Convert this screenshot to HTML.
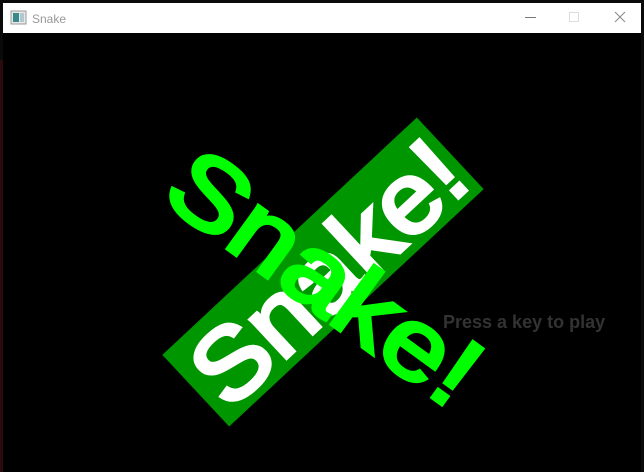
<!DOCTYPE html>
<html><head><meta charset="utf-8"><style>
html,body{margin:0;padding:0;background:#000;width:644px;height:472px;overflow:hidden}
</style></head><body>
<svg width="644" height="472" viewBox="0 0 644 472" xmlns="http://www.w3.org/2000/svg" style="display:block">
<rect x="0" y="0" width="644" height="472" fill="#0a0a0a"/>
<rect x="0" y="60" width="3" height="412" fill="#2a0a0a"/>
<rect x="3" y="3" width="638" height="30" fill="#fff"/>
<rect x="3" y="33" width="638" height="439" fill="#000"/>
<rect x="11" y="11" width="15" height="13" fill="#e8e8e8" stroke="#9a9a9a" stroke-width="1"/>
<rect x="13" y="13" width="6" height="9" fill="#3a8a8a"/>
<rect x="20" y="13" width="4" height="9" fill="#b0c8d0"/>
<text x="32" y="23" font-family="Liberation Sans, sans-serif" font-size="12" fill="#999">Snake</text>
<line x1="525" y1="17.5" x2="536" y2="17.5" stroke="#777" stroke-width="1"/>
<rect x="569.5" y="12.5" width="9" height="9" fill="none" stroke="#ddd" stroke-width="1"/>
<path d="M615 12 L625 22 M625 12 L615 22" stroke="#888" stroke-width="1"/>
<g transform="translate(323,272) rotate(-43)">
<rect x="-174" y="-49" width="348" height="98" fill="#009600"/>
<text x="-164" y="38" textLength="334" lengthAdjust="spacingAndGlyphs" font-family="Liberation Sans, sans-serif" font-size="100" fill="#fff" stroke="#fff" stroke-width="4">Snake!</text>
</g>
<g transform="translate(328,276) rotate(36)">
<text x="-182" y="37" textLength="360" lengthAdjust="spacingAndGlyphs" font-family="Liberation Sans, sans-serif" font-size="100" fill="#00ff00" stroke="#00ff00" stroke-width="4">Snake!</text>
</g>
<text x="443" y="328" font-family="Liberation Sans, sans-serif" font-weight="bold" font-size="18" fill="#333">Press a key to play</text>
</svg>
</body></html>
